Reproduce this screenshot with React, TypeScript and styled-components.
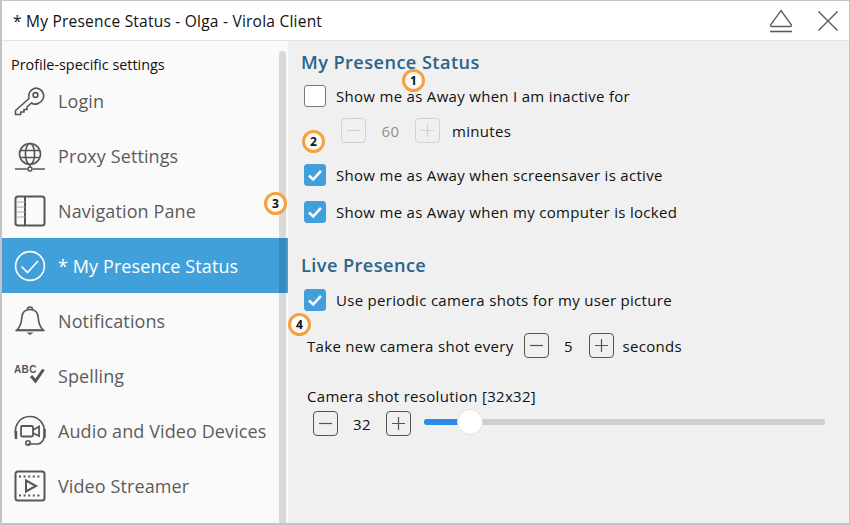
import React from 'react';
import styled, { createGlobalStyle } from 'styled-components';

const Global = createGlobalStyle`
  html, body { margin: 0; padding: 0; background: #fff; }
  body { font-family: "Open Sans", "Noto Sans", sans-serif; }
`;
const Win = styled.div`
  position: relative; width: 850px; height: 525px; box-sizing: border-box;
  border: 1px solid #c4c4c4; border-width: 1px 1px 2px 2px; display: flex; flex-direction: column; overflow: hidden;
`;
const TitleBar = styled.div`
  height: 39px; flex: none; background: #fff; border-bottom: 1px solid #e4e4e4; display: flex; align-items: center;
  padding: 0 10px 0 11px; color: #111; font-size: 15.5px; letter-spacing: .23px;
`;
const TitleText = styled.div` flex: 1; white-space: pre; `;
const TitleIcons = styled.div` display: flex; align-items: center; gap: 24px; `;
const Body = styled.div` flex: 1; display: flex; min-height: 0; `;
const Side = styled.div`
  position: relative; width: 286px; flex: none; background: #fafafa; border-right: 0; padding-top: 15px; box-sizing: border-box;
`;
const Thumb = styled.div`
  position: absolute; left: 277px; top: 10px; width: 7px; bottom: 0; border-radius: 4px 4px 0 0; background: rgba(0,0,0,.13);
`;
const Head = styled.div` font-size: 14.4px; color: #111; padding-left: 9px; line-height: 18px; margin-bottom: -1px; `;
const Row = styled.div<{ $active?: boolean }>`
  height: 55px; display: flex; align-items: center; padding-left: 12px; gap: 12px; font-size: 18px; letter-spacing: .1px;
  color: ${p => (p.$active ? '#fff' : '#5c5c5c')}; background: ${p => (p.$active ? '#419fda' : 'transparent')};
  white-space: pre; svg { flex: none; }
`;
const Main = styled.div` flex: 1; background: #f0f0f0; padding: 8px 0 0 13px; position: relative; `;
const Section = styled.h2<{ $top?: number }>`
  margin: ${p => p.$top ?? 0}px 0 0 0; font-size: 18.2px; line-height: 26px; font-weight: 600; color: #2b6488; letter-spacing: .42px;
`;
const CheckRow = styled.div<{ $top: number }>`
  display: flex; align-items: center; gap: 10px; height: 23px; margin: ${p => p.$top}px 0 0 3px; font-size: 15px; letter-spacing: .3px; color: #111; white-space: pre;
`;
const Box = styled.span<{ $on?: boolean }>`
  width: 22px; height: 22px; box-sizing: border-box; border-radius: 3px; display: flex; align-items: center; justify-content: center; flex: none;
  background: ${p => (p.$on ? '#419fda' : '#fff')}; border: 1px solid ${p => (p.$on ? '#419fda' : '#7a7a7a')};
`;
const Spin = styled.div<{ $top: number; $left: number }>`
  display: flex; align-items: center; height: 25px; margin: ${p => p.$top}px 0 0 ${p => p.$left}px; font-size: 15px; letter-spacing: .3px; color: #111; white-space: pre;
`;
const StepBtn = styled.span<{ $off?: boolean }>`
  width: 25px; height: 25px; box-sizing: border-box; border-radius: 4px; flex: none; display: flex; align-items: center; justify-content: center;
  border: 1px solid ${p => (p.$off ? '#d2d2d2' : '#555')}; color: ${p => (p.$off ? '#d2d2d2' : '#555')};
`;
const Num = styled.span<{ $off?: boolean; $w: number }>`
  width: ${p => p.$w}px; text-align: center; color: ${p => (p.$off ? '#8f8f8f' : '#111')};
`;
const Suffix = styled.span<{ $gap: number }>` margin-left: ${p => p.$gap}px; `;
const Label = styled.span<{ $gap: number }>` margin-right: ${p => p.$gap}px; `;
const ResLabel = styled.div`
  margin: 28px 0 0 -7px; padding-left: 13px; font-size: 15px; letter-spacing: .3px; line-height: 20px; color: #111;
`;
const Track = styled.div`
  position: relative; margin-left: 13px; width: 401px; height: 6px; margin-top: -3px; border-radius: 3px; background: #cfcfcf;
`;
const Fill = styled.div` position: absolute; left: 0; top: 0; bottom: 0; width: 40px; border-radius: 3px; background: #2b8be6; `;
const Knob = styled.div`
  position: absolute; left: 33px; top: -10px; width: 26px; height: 26px; border-radius: 50%; background: #fff; border: 1px solid #e2e2e2; box-sizing: border-box;
`;
const Callout = styled.div<{ $x: number; $y: number }>`
  position: absolute; left: ${p => p.$x}px; top: ${p => p.$y}px; width: 23px; height: 23px; box-sizing: border-box; border-radius: 50%;
  border: 3px solid #f7a13d; background: #fbfbfb; color: #111; font: 700 12px "Open Sans", sans-serif; display: flex; align-items: center; justify-content: center;
`;

const Ic: React.FC<{ children: React.ReactNode; c?: string }> = ({ children, c = '#565656' }) => (
  <svg width="32" height="32" viewBox="0 0 32 32" fill="none" stroke={c} strokeWidth="1.6">{children}</svg>
);
const Check = () => (
  <svg width="16" height="14" viewBox="0 0 16 14"><path d="M2 7.5 L6.2 11.5 L14 2.8" fill="none" stroke="#fff" strokeWidth="2.6" /></svg>
);
const Minus = () => <svg width="15" height="15" viewBox="0 0 15 15"><path d="M1 7.5H14" stroke="currentColor" strokeWidth="1.2" /></svg>;
const Plus = () => <svg width="15" height="15" viewBox="0 0 15 15"><path d="M1 7.5H14M7.5 1V14" stroke="currentColor" strokeWidth="1.2" /></svg>;

const items: [string, React.ReactNode][] = [
  ['Login', <Ic><circle cx="21.5" cy="10" r="2.4" /><path d="M15 13.5 C13.5 7 19 2.5 23 3.2 C28 4 31 9 29 14 C27 18.5 21 20.5 17.5 18 L13 22 L13 24.5 L10 24.5 L10 27 L7 27 L6.5 29.5 L1.5 29.5 L1.5 25.5 Z" /></Ic>],
  ['Proxy Settings', <Ic><circle cx="16" cy="14" r="10.5" /><ellipse cx="16" cy="14" rx="4.6" ry="10.5" /><path d="M6 10.5H26M6 17.5H26M16 24.5V27" /><path d="M1 29H13M19 29H31" /><circle cx="16" cy="29" r="2" /></Ic>],
  ['Navigation Pane', <Ic><rect x="1.5" y="1.5" width="29" height="29" rx="2.5" strokeWidth="2" /><path d="M11 2V30" strokeWidth="2" /><path d="M2 7H11M2 12H11M2 17H11M2 22H11" strokeWidth="1" stroke="#aaa" /></Ic>],
  ['* My Presence Status', <Ic c="#fff"><circle cx="16" cy="16" r="14.4" /><path d="M7.5 16.5L13.5 22.5L24 11" /></Ic>],
  ['Notifications', <Ic><path d="M13.5 4.5 C13.5 1.2 18.5 1.2 18.5 4.5" /><path d="M3 25 C7 21 7.5 17 7.8 12.5 C8.2 7 11.5 4.5 16 4.5 C20.5 4.5 23.8 7 24.2 12.5 C24.5 17 25 21 29 25 Z" /><path d="M1.5 25.5H30.5" /><path d="M12.5 27.5H19.5L16 30Z" fill="#565656" stroke="none" /></Ic>],
  ['Spelling', <Ic><text x="0" y="13" fontFamily="Liberation Sans" fontSize="10" fontWeight="700" fill="#565656" stroke="none" letterSpacing=".4">ABC</text><path d="M17 16L21.5 21L29.5 9.5" strokeWidth="3" /></Ic>],
  ['Audio and Video Devices', <Ic><path d="M2 23 C-1 10 6 1.5 16 1.5 C25 1.5 31 9 30.5 18 C30.5 24 29 28 24 29 H14" /><circle cx="14" cy="28" r="2.2" /><rect x="7" y="11" width="12" height="10.5" rx="1.2" strokeWidth="1.8" /><path d="M19 15L25 11.5V21L19 18" strokeWidth="1.8" /><path d="M2 16V24M30.5 14V23" strokeWidth="2.4" /></Ic>],
  ['Video Streamer', <Ic><rect x="1.5" y="1.5" width="29" height="29" rx="2.5" strokeWidth="2" /><path d="M5 6.5H27M5 25.5H27" strokeWidth="2.2" strokeDasharray="2 2.6" /><path d="M12 10.5L22 16L12 21.5Z" strokeWidth="2" /></Ic>],
];

export default function App() {
  return (
    <>
      <Global />
      <Win>
        <TitleBar>
          <TitleText>* My Presence Status - Olga - Virola Client</TitleText>
          <TitleIcons>
            <svg width="24" height="24" viewBox="0 0 24 24" fill="none" stroke="#5a5a5a" strokeWidth="1.3"><path d="M12 1.5 L22.5 16 Q23 17.5 21 17.5 H3 Q1 17.5 1.5 16 Z" /><path d="M1 22.5H23" strokeWidth="1.6" /></svg>
            <svg width="22" height="22" viewBox="0 0 22 22" stroke="#5a5a5a" strokeWidth="1.4"><path d="M1.5 1.5L20.5 20.5M20.5 1.5L1.5 20.5" /></svg>
          </TitleIcons>
        </TitleBar>
        <Body>
          <Side>
            <Head>Profile-specific settings</Head>
            {items.map(([label, icon]) => (
              <Row key={label} $active={label.startsWith('*')}>{icon}{label}</Row>
            ))}
            <Thumb />
          </Side>
          <Main>
            <Section>My Presence Status</Section>
            <CheckRow $top={9}><Box />Show me as Away when I am inactive for</CheckRow>
            <Spin $top={11} $left={40}>
              <StepBtn $off><Minus /></StepBtn><Num $off $w={49}>60</Num><StepBtn $off><Plus /></StepBtn><Suffix $gap={12}>minutes</Suffix>
            </Spin>
            <CheckRow $top={20}><Box $on><Check /></Box>Show me as Away when screensaver is active</CheckRow>
            <CheckRow $top={14}><Box $on><Check /></Box>Show me as Away when my computer is locked</CheckRow>
            <Section $top={29}>Live Presence</Section>
            <CheckRow $top={10}><Box $on><Check /></Box>Use periodic camera shots for my user picture</CheckRow>
            <Spin $top={22} $left={6}>
              <Label $gap={10}>Take new camera shot every</Label><StepBtn><Minus /></StepBtn><Num $w={40}>5</Num><StepBtn><Plus /></StepBtn><Suffix $gap={9}>seconds</Suffix>
            </Spin>
            <ResLabel>Camera shot resolution [32x32]</ResLabel>
            <Spin $top={5} $left={12}>
              <StepBtn><Minus /></StepBtn><Num $w={48}>32</Num><StepBtn><Plus /></StepBtn>
              <Track><Fill /><Knob /></Track>
            </Spin>
          </Main>
        </Body>
        <Callout $x={400} $y={68}>1</Callout>
        <Callout $x={300} $y={129}>2</Callout>
        <Callout $x={262} $y={191}>3</Callout>
        <Callout $x={286} $y={312}>4</Callout>
      </Win>
    </>
  );
}
